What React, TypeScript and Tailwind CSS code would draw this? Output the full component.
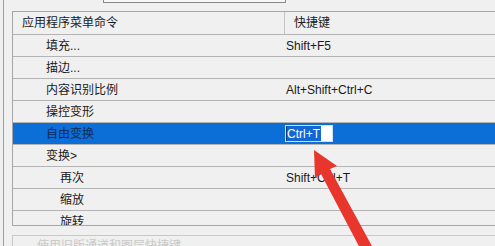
const font = { fontFamily: '"Liberation Sans", "Noto Sans CJK SC", sans-serif' };

type Row = { name: string; key?: string; indent?: boolean; selected?: boolean };

const rows: Row[] = [
  { name: "填充...", key: "Shift+F5" },
  { name: "描边..." },
  { name: "内容识别比例", key: "Alt+Shift+Ctrl+C" },
  { name: "操控变形" },
  { name: "自由变换", key: "Ctrl+T", selected: true },
  { name: "变换>" },
  { name: "再次", key: "Shift+Ctrl+T", indent: true },
  { name: "缩放", indent: true },
  { name: "旋转", indent: true },
];

function ShortcutEdit({ value }: { value: string }) {
  return (
    <div className="flex h-[17px] items-stretch border border-[#cfe0f5] bg-white">
      <span className="w-px bg-[#0b3a7a]" />
      <span className="flex items-center bg-[#1466d2] pr-[1px] text-white">{value}</span>
      <span className="w-[11px] bg-white" />
    </div>
  );
}

function MenuRow({ row }: { row: Row }) {
  return (
    <div
      className={`grid h-[22px] shrink-0 grid-cols-[271px_1fr] items-center border-b border-[#b4b4b4] ${
        row.selected ? "bg-[#0c6fd8] text-[#0f2c55]" : "text-[#1a1a1a]"
      }`}
    >
      <div className={row.indent ? "pl-[47px]" : "pl-[33px]"}>{row.name}</div>
      <div className="flex pl-[1px]">
        {row.selected && row.key ? <ShortcutEdit value={row.key} /> : <span className="pl-[1px]">{row.key}</span>}
      </div>
    </div>
  );
}

export default function App() {
  return (
    <div className="relative h-[246px] w-[495px] overflow-hidden bg-[#f0f0f0] pl-[3px] text-[12px]" style={font}>
      <div className="flex h-full flex-col border-l border-[#9c9c9c] pl-[8px]">
        <div className="ml-[91px] h-[3px] w-[183px] shrink-0 border-x border-b border-[#8a8a8a] bg-[#f7f7f7]" />

        <div className="mt-[8px] flex h-[215px] shrink-0 flex-col overflow-hidden border-y border-l border-[#a6a6a6]">
          <div className="grid h-[23px] shrink-0 grid-cols-[271px_1fr] items-center border-b border-[#b4b4b4] text-[#1a1a1a]">
            <div className="pl-[9px]">应用程序菜单命令</div>
            <div className="flex h-full items-center border-l border-[#c4c4c4] pl-[9px]">快捷键</div>
          </div>
          {rows.map((r) => (
            <MenuRow key={r.name} row={r} />
          ))}
        </div>

        <div className="mt-[9px] h-[20px] shrink-0 border-t border-l border-[#c8c8c8] pl-[24px] pt-[1px] text-[#c9c9c9]">
          使用旧版通道和图层快捷键
        </div>
      </div>

      <svg className="pointer-events-none absolute left-0 top-0" width="495" height="246" viewBox="0 0 495 246">
        <polygon
          points="314,150 337,166 330,169 373,248 362,252 321,174 315,178"
          fill="#e8362d"
        />
      </svg>
    </div>
  );
}
